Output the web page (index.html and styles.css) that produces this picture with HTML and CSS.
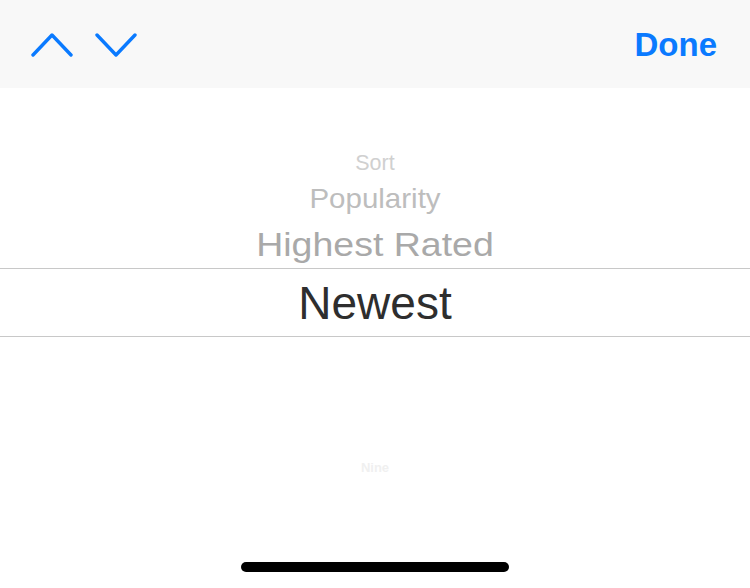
FILE: index.html
```html
<!DOCTYPE html>
<html lang="en">
<head>
<meta charset="utf-8">
<title>Sort picker</title>
<link rel="stylesheet" href="styles.css">
</head>
<body>
<div class="screen">
  <header class="toolbar">
    <div class="nav">
      <button class="chev" aria-label="Previous">
        <svg width="42" height="26" viewBox="0 0 42 26"><path d="M2 23 L21 3 L40 23" fill="none" stroke="#0a7aff" stroke-width="3.4" stroke-linecap="round" stroke-linejoin="round"/></svg>
      </button>
      <button class="chev" aria-label="Next">
        <svg width="42" height="26" viewBox="0 0 42 26"><path d="M2 3 L21 23 L40 3" fill="none" stroke="#0a7aff" stroke-width="3.4" stroke-linecap="round" stroke-linejoin="round"/></svg>
      </button>
    </div>
    <button class="done">Done</button>
  </header>
  <main class="picker">
    <div class="row r-sort">Sort</div>
    <div class="row r-pop">Popularity</div>
    <div class="row r-high">Highest Rated</div>
    <div class="row r-sel">Newest</div>
    <div class="row r-gap"></div>
    <div class="row r-nine">Nine</div>
  </main>
  <footer class="home"><span class="home-bar"></span></footer>
</div>
</body>
</html>
```
FILE: styles.css
```css
html, body {
  margin: 0;
  padding: 0;
  background: #ffffff;
}
.screen {
  width: 750px;
  height: 588px;
  display: flex;
  flex-direction: column;
  font-family: "Liberation Sans", Arial, sans-serif;
  overflow: hidden;
}
.toolbar {
  height: 88px;
  flex: 0 0 88px;
  background: #f8f8f8;
  display: flex;
  align-items: center;
  justify-content: space-between;
  padding: 0 33px 0 31px;
  box-sizing: border-box;
}
.nav {
  display: flex;
  gap: 22px;
  align-items: center;
  margin-top: 2px;
}
.chev {
  border: 0;
  background: none;
  padding: 0;
  width: 42px;
  height: 26px;
  display: block;
}
.chev svg { display: block; }
.done {
  border: 0;
  background: none;
  padding: 0;
  font-family: "Liberation Sans", Arial, sans-serif;
  font-weight: 700;
  font-size: 33px;
  color: #0a7aff;
  line-height: 40px;
  margin-top: 1px;
}
.picker {
  flex: 1 1 auto;
  display: flex;
  flex-direction: column;
  align-items: stretch;
  padding-top: 56px;
}
.row {
  text-align: center;
  white-space: nowrap;
}
.r-sort {
  height: 36px;
  line-height: 38px;
  font-size: 21.5px;
  color: #d0d0d0;
}
.r-pop {
  height: 36px;
  line-height: 37px;
  font-size: 29.5px;
  color: #bdbdbd;
  transform: scaleY(0.92);
}
.r-high {
  height: 52px;
  line-height: 58px;
  font-size: 37.5px;
  color: #a9a9a9;
  transform: scaleY(0.88);
}
.r-sel {
  height: 69px;
  line-height: 68px;
  font-size: 46px;
  color: #2e2e2e;
  border-top: 1px solid #c8c8c8;
  border-bottom: 1px solid #c8c8c8;
  box-sizing: border-box;
}
.r-gap {
  height: 121px;
}
.r-nine {
  height: 20px;
  line-height: 20px;
  font-size: 13px;
  font-weight: 700;
  color: #f0f0f0;
}
.home {
  flex: 0 0 auto;
  height: 43px;
  display: flex;
  justify-content: center;
  align-items: flex-start;
}
.home-bar {
  display: block;
  width: 268px;
  height: 10px;
  border-radius: 5px;
  background: #000000;
  margin-top: 17px;
}
```
